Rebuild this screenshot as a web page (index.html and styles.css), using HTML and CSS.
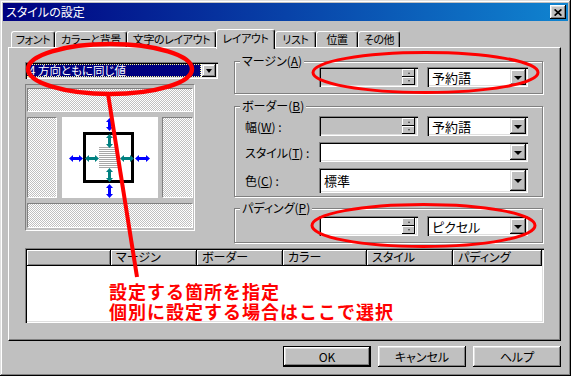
FILE: index.html
```html
<!DOCTYPE html>
<html lang="ja">
<head>
<meta charset="utf-8">
<title>スタイルの設定</title>
<link rel="stylesheet" href="styles.css">
</head>
<body>
<div class="window">
  <div class="titlebar">
    <span class="title">スタイルの設定</span>
    <span class="close"><svg width="8" height="7" viewBox="0 0 8 7"><path d="M0.6 0.4L7.4 6.6M7.4 0.4L0.6 6.6" stroke="#000" stroke-width="1.7"/></svg></span>
  </div>
  <div class="client">
    <div class="tabs">
      <div class="tab t-font">フォント</div>
      <div class="tab t-color">カラーと背景</div>
      <div class="tab t-text">文字のレイアウト</div>
      <div class="tab t-layout active">レイアウト</div>
      <div class="tab t-list">リスト</div>
      <div class="tab t-pos">位置</div>
      <div class="tab t-other">その他</div>
    </div>
    <div class="panel">
      <div class="top">
        <div class="left">
          <div class="combo sunken">
            <div class="combo-value">4 方向ともに同じ値</div>
            <div class="dd-btn small"></div>
          </div>
          <div class="preview">
            <div class="hatch band-top"></div>
            <div class="hatch side-left"></div>
            <div class="canvas">
              <svg width="96" height="81" viewBox="0 0 96 81">
                <g stroke="#a8a8a8" stroke-width="1">
                  <path d="M37 30.5H56M37 32.5H56M37 34.5H56M37 36.5H56M37 38.5H56M37 40.5H56M37 42.5H56M37 44.5H56M37 46.5H56M37 48.5H56M37 50.5H56"/>
                </g>
                <rect x="22.5" y="16.5" width="48" height="48" fill="none" stroke="#000" stroke-width="3"/>
                <g fill="#0000ff">
                  <path d="M47.5 1L51 5L49 5L49 10L51 10L47.5 14L44 10L46 10L46 5L44 5Z"/>
                  <path d="M47.5 67L51 71L49 71L49 77L51 77L47.5 81L44 77L46 77L46 71L44 71Z"/>
                  <path d="M7 41.5L11 38L11 40L17 40L17 38L21 41.5L17 45L17 43L11 43L11 45Z"/>
                  <path d="M73 41.5L77 38L77 40L84 40L84 38L88 41.5L84 45L84 43L77 43L77 45Z"/>
                </g>
                <g fill="#008080">
                  <path d="M47.5 17L51 21L49 21L49 27L51 27L47.5 31L44 27L46 27L46 21L44 21Z"/>
                  <path d="M47.5 51L51 55L49 55L49 61L51 61L47.5 65L44 61L46 61L46 55L44 55Z"/>
                  <path d="M23 41.5L27 38L27 40L33 40L33 38L37 41.5L33 45L33 43L27 43L27 45Z"/>
                  <path d="M58 41.5L62 38L62 40L68 40L68 38L72 41.5L68 45L68 43L62 43L62 45Z"/>
                </g>
              </svg>
            </div>
            <div class="hatch side-right"></div>
            <div class="hatch band-bottom"></div>
          </div>
        </div>
        <div class="right">
          <div class="group g-margin">
            <div class="group-label">マージン(<u>A</u>)</div>
            <div class="rows">
              <div class="row">
                <span class="label"></span>
                <div class="spin sunken disabled">
                  <span class="spin-field"></span>
                  <span class="spin-btns"><span class="sb up"></span><span class="sb down"></span></span>
                </div>
                <div class="select sunken sel-col"><span class="sel-text">予約語</span><span class="dd-btn"></span></div>
              </div>
            </div>
          </div>
          <div class="group g-border">
            <div class="group-label">ボーダー(<u>B</u>)</div>
            <div class="rows">
              <div class="row">
                <span class="label">幅(<u>W</u>) :</span>
                <div class="spin sunken disabled">
                  <span class="spin-field"></span>
                  <span class="spin-btns"><span class="sb up"></span><span class="sb down"></span></span>
                </div>
                <div class="select sunken sel-col"><span class="sel-text">予約語</span><span class="dd-btn"></span></div>
              </div>
              <div class="row">
                <span class="label">スタイル(<u>T</u>) :</span>
                <div class="select sunken wide"><span class="sel-text"></span><span class="dd-btn"></span></div>
              </div>
              <div class="row tall">
                <span class="label">色(<u>C</u>) :</span>
                <div class="select sunken wide"><span class="sel-text">標準</span><span class="dd-btn"></span></div>
              </div>
            </div>
          </div>
          <div class="group g-padding">
            <div class="group-label">パディング(<u>P</u>)</div>
            <div class="rows">
              <div class="row">
                <span class="label"></span>
                <div class="spin sunken">
                  <span class="spin-field"></span>
                  <span class="spin-btns"><span class="sb up"></span><span class="sb down"></span></span>
                </div>
                <div class="select sunken sel-col"><span class="sel-text">ピクセル</span><span class="dd-btn"></span></div>
              </div>
            </div>
          </div>
        </div>
      </div>
      <div class="list sunken">
        <div class="list-head">
          <span class="col c0"></span>
          <span class="col c1">マージン</span>
          <span class="col c2">ボーダー</span>
          <span class="col c3">カラー</span>
          <span class="col c4">スタイル</span>
          <span class="col c5">パディング</span>
        </div>
        <div class="list-body"></div>
      </div>
    </div>
    <div class="buttons">
      <button class="btn default">OK</button>
      <button class="btn">キャンセル</button>
      <button class="btn">ヘルプ</button>
    </div>
  </div>
  <svg class="annot" width="571" height="376" viewBox="0 0 571 376">
    <g fill="none" stroke="#ff0000">
      <ellipse cx="110" cy="69" rx="82" ry="25" stroke-width="4.5"/>
      <line x1="108" y1="94" x2="137" y2="277" stroke-width="4"/>
      <ellipse cx="425.5" cy="72.5" rx="112.5" ry="20" stroke-width="3"/>
      <ellipse cx="423.5" cy="225.5" rx="111.5" ry="21" stroke-width="3"/>
    </g>
  </svg>
  <div class="annot-text">設定する箇所を指定<br>個別に設定する場合はここで選択</div>
</div>
</body>
</html>
```

FILE: styles.css
```css
* { box-sizing: border-box; }
html, body { margin: 0; padding: 0; }
body {
  width: 571px;
  height: 376px;
  overflow: hidden;
  background: #c0c0c0;
  font-family: "Noto Sans CJK JP", "Noto Sans", sans-serif;
  font-size: 12px;
  color: #000;
}
u { text-decoration: underline; text-underline-offset: 1px; }

.window {
  position: relative;
  width: 571px;
  height: 376px;
  padding: 3px;
  background: #c0c0c0;
  box-shadow: inset -1px -1px #000, inset 1px 1px #dfdfdf, inset -2px -2px #808080, inset 2px 2px #fff;
}

.titlebar {
  height: 18px;
  display: flex;
  align-items: center;
  justify-content: space-between;
  padding: 0 2px 0 3px;
  background: linear-gradient(90deg, #000080, #1084d0);
  color: #fff;
}
.title { line-height: 18px; font-feature-settings: "palt"; }
.close {
  width: 16px;
  height: 14px;
  display: flex;
  align-items: center;
  justify-content: center;
  background: #c0c0c0;
  box-shadow: inset -1px -1px #000, inset 1px 1px #fff, inset -2px -2px #808080, inset 2px 2px #dfdfdf;
}

.client { padding: 8px 0 0 5px; }

.tabs {
  display: flex;
  align-items: flex-end;
  height: 18px;
  margin-left: 3px;
}
.tab {
  height: 16px;
  border: 1px solid #fff;
  border-bottom: 0;
  border-right-color: #000;
  border-radius: 3px 3px 0 0;
  box-shadow: inset -1px 0 #808080;
  text-align: center;
  font-size: 11px;
  letter-spacing: -0.4px;
  line-height: 14px;
  font-feature-settings: "palt";
  white-space: nowrap;
}
.tab.active {
  height: 20px;
  margin-bottom: -2px;
  position: relative;
  z-index: 1;
  background: #c0c0c0;
  line-height: 16px;
}
.t-font { width: 44px; }
.t-color { width: 72px; }
.t-text { width: 89px; }
.t-layout { width: 59px; }
.t-list { width: 41px; }
.t-pos { width: 42px; }
.t-other { width: 42px; }

.panel {
  width: 553px;
  height: 294px;
  border: 1px solid;
  border-color: #fff #000 #000 #fff;
  box-shadow: inset -1px -1px #808080;
  padding: 13px 0 0 16px;
  display: flex;
  flex-direction: column;
}

.sunken {
  box-shadow: inset 1px 1px #808080, inset 2px 2px #000, inset -1px -1px #fff, inset -2px -2px #dfdfdf;
}

.top { display: flex; gap: 16px; align-items: flex-start; }
.left { width: 193px; margin-top: 1px; display: flex; flex-direction: column; gap: 5px; }

.combo {
  height: 17px;
  padding: 2px;
  display: flex;
  gap: 1px;
  background: #fff;
}
.combo-value {
  flex: 1;
  background: #000080;
  color: #fff;
  border: 1px dotted #ffff90;
  font-size: 11.5px;
  line-height: 11px;
  padding-left: 1px;
  font-feature-settings: "palt";
  white-space: nowrap;
}

.dd-btn {
  width: 16px;
  flex: none;
  display: flex;
  align-items: center;
  justify-content: center;
  background: #c0c0c0;
  box-shadow: inset -1px -1px #000, inset 1px 1px #dfdfdf, inset -2px -2px #808080, inset 2px 2px #fff;
}
.dd-btn::after {
  content: "";
  width: 0;
  height: 0;
  border-left: 4px solid transparent;
  border-right: 4px solid transparent;
  border-top: 4px solid #000;
  margin-top: 1px;
}
.dd-btn.small { width: 14px; }
.dd-btn.small::after { border-left-width: 3.5px; border-right-width: 3.5px; }

.preview {
  width: 170px;
  height: 147px;
  border: 1px solid;
  border-color: #808080 #fff #fff #808080;
  padding: 3px 1px 2px 1px;
  display: grid;
  grid-template-columns: 30px 5px 96px 4px 31px;
  grid-template-rows: 24px 5px 81px 5px 25px;
}
.hatch {
  background: repeating-conic-gradient(#ffffff 0 25%, #c0c0c0 0 50%) 0 0 / 2px 2px;
  border: 1px solid;
  border-color: #808080 #fff #fff #808080;
}
.band-top { grid-column: 1 / -1; grid-row: 1; }
.side-left { grid-column: 1; grid-row: 3; }
.canvas { grid-column: 3; grid-row: 3; background: #fff; }
.canvas svg { display: block; }
.side-right { grid-column: 5; grid-row: 3; }
.band-bottom { grid-column: 1 / -1; grid-row: 5; }

.right { width: 309px; display: flex; flex-direction: column; }
.group {
  border: 1px solid #808080;
  box-shadow: inset 1px 1px #fff, 1px 1px #fff;
  padding: 0 14px 6px 0;
}
.group-label {
  width: max-content;
  height: 12px;
  line-height: 12px;
  margin: -7px 0 0 5px;
  padding: 0 2px;
  background: #c0c0c0;
  font-feature-settings: "palt";
}
.g-border { margin-top: 12px; padding-bottom: 3px; }
.g-border .rows { padding-top: 4px; }
.g-padding { margin-top: 11px; }
.g-padding .rows { padding-top: 2px; }

.rows { display: flex; flex-direction: column; gap: 6px; padding-left: 10px; }
.row {
  display: grid;
  grid-template-columns: 74px 99px 9px 101px;
  height: 20px;
  align-items: center;
}
.row.tall { height: 25px; }
.label { font-feature-settings: "palt"; white-space: nowrap; }
.row > .spin { grid-column: 2; }
.row > .sel-col { grid-column: 4; }
.row > .wide { grid-column: 2 / 5; }

.spin {
  height: 20px;
  padding: 2px 3px 2px 2px;
  display: flex;
  background: #fff;
}
.spin.disabled { background: #c0c0c0; }
.spin-field { flex: 1; }
.spin-btns { width: 13px; display: flex; flex-direction: column; }
.sb {
  flex: 1;
  display: flex;
  align-items: center;
  justify-content: center;
  background: #c0c0c0;
  box-shadow: inset -1px -1px #000, inset 1px 1px #fff;
}
.sb::after {
  content: "";
  width: 0;
  height: 0;
  border-left: 1.5px solid transparent;
  border-right: 1.5px solid transparent;
}
.sb.up::after { border-bottom: 2px solid #404040; }
.sb.down::after { border-top: 2px solid #404040; }

.select {
  height: 100%;
  padding: 2px;
  display: flex;
  background: #fff;
}
.row .select { height: 20px; }
.row.tall .select { height: 25px; }
.sel-text {
  flex: 1;
  padding-left: 3px;
  display: flex;
  align-items: center;
  font-size: 13px;
  font-feature-settings: "palt";
}

.list {
  margin-top: 5px;
  width: 519px;
  height: 75px;
  padding: 2px;
  background: #fff;
  display: flex;
  flex-direction: column;
}
.list-head { display: flex; height: 16px; flex: none; }
.col {
  background: #c0c0c0;
  box-shadow: inset 1px 1px #fff, inset -1px -1px #808080;
  border-right: 1px solid #000;
  border-bottom: 1px solid #000;
  padding-left: 5px;
  line-height: 14px;
  font-feature-settings: "palt";
  white-space: nowrap;
}
.c0 { width: 84px; }
.c1 { width: 86px; }
.c2 { width: 86px; }
.c3 { width: 84px; }
.c4 { width: 86px; }
.c5 { flex: 1; }
.list-body { flex: 1; }

.buttons {
  width: 553px;
  margin-top: 5px;
  display: flex;
  justify-content: flex-end;
  gap: 7px;
}
.btn {
  width: 88px;
  height: 21px;
  padding: 0;
  border: 0;
  background: #c0c0c0;
  font-family: inherit;
  font-size: 12px;
  color: #000;
  font-feature-settings: "palt";
  box-shadow: inset -1px -1px #000, inset 1px 1px #fff, inset -2px -2px #808080, inset 2px 2px #dfdfdf;
}
.btn.default {
  border: 1px solid #000;
}

.annot {
  position: absolute;
  left: 0;
  top: 0;
  pointer-events: none;
}
.annot-text {
  position: absolute;
  left: 109px;
  top: 281px;
  color: #ff0000;
  font-weight: bold;
  font-size: 18px;
  line-height: 20px;
  letter-spacing: 1px;
  white-space: nowrap;
}
```
